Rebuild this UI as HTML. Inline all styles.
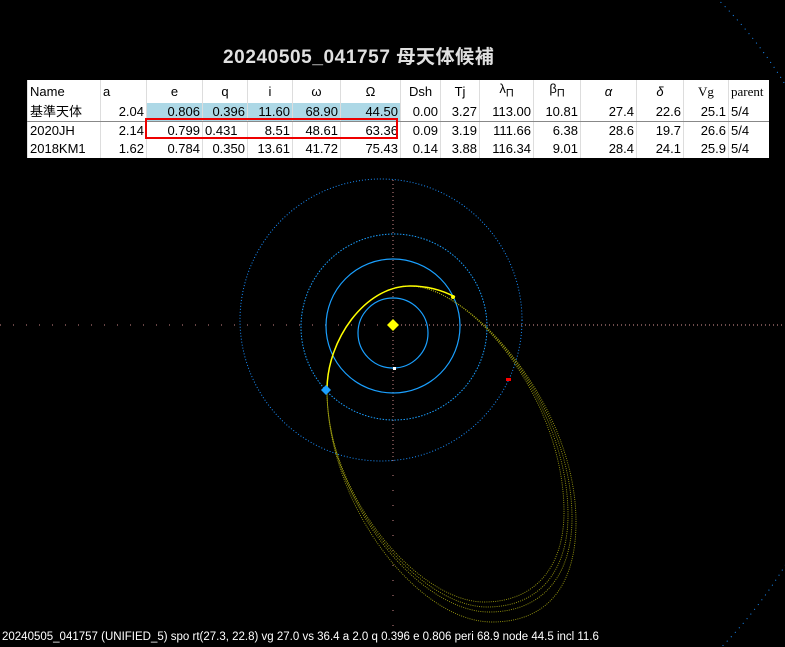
<!DOCTYPE html>
<html><head><meta charset="utf-8"><style>
html,body{margin:0;background:#000;width:785px;height:647px;overflow:hidden;position:relative;font-family:"Liberation Sans","Noto Sans CJK JP",sans-serif}
.t{position:absolute;left:223px;top:42px;width:300px;color:#e0e0e0;font-weight:bold;font-size:19px;letter-spacing:0.6px;white-space:nowrap}
table{position:absolute;left:27px;top:80px;border-collapse:collapse;background:#fff;font-size:13px;color:#000;table-layout:fixed;width:741px}
td{height:18px;padding:0 2px;border-left:1px solid #ddd;white-space:nowrap;overflow:hidden;text-align:right;line-height:17px}
tr.h td{text-align:center;height:19px}
tr.h td:first-child,tr td:first-child{text-align:left}
tr.r1 td{border-bottom:1px solid #888}
.b{background:#add8e6}
.bot{position:absolute;left:2px;top:630px;color:#fff;font-size:11.5px;line-height:14px;white-space:nowrap}
.box{position:absolute;left:145px;top:118px;width:249px;height:17px;border:2px solid #e00}
</style></head><body>
<svg width="785" height="647" style="position:absolute;left:0;top:0">
<defs><clipPath id="cr"><rect x="690" y="0" width="100" height="647"/></clipPath></defs>
<line x1="0" y1="325" x2="393" y2="325" stroke="#c88" stroke-dasharray="1 12"/>
<line x1="393" y1="325" x2="785" y2="325" stroke="#d99" stroke-dasharray="1 3"/>
<line x1="393" y1="180" x2="393" y2="460" stroke="#c88" stroke-dasharray="1 3"/>
<line x1="393" y1="460" x2="393" y2="640" stroke="#c88" stroke-dasharray="1 14"/>
<circle cx="393" cy="325" r="460" fill="none" stroke="#1a8fff" stroke-dasharray="1 5" clip-path="url(#cr)"/>
<circle cx="381" cy="320" r="141" fill="none" stroke="#1a8fff" stroke-dasharray="1 2"/>
<circle cx="394" cy="327" r="93" fill="none" stroke="#1a9fff" stroke-dasharray="1.5 1.5"/>
<circle cx="393" cy="326" r="67" fill="none" stroke="#1aa0ff" stroke-width="1.2"/>
<circle cx="393" cy="333" r="35" fill="none" stroke="#1aa0ff" stroke-width="1.2"/>
<g fill="none" stroke="#9a9a10" stroke-dasharray="1 1.2" stroke-width="0.9">
<path d="M327 390 C327 340 365 286 410 286 C470 286 568 400 568 515 C568 570 540 607 487 607 C420 607 327 500 327 390Z"/>
<path d="M327 390 C327 340 365 286 410 286 C470 286 572 402 572 518 C572 575 543 612 489 612 C420 612 327 502 327 390Z"/>
<path d="M327 390 C327 340 365 286 410 286 C470 286 564 398 564 512 C564 566 536 602 484 602 C420 602 327 498 327 390Z"/>
<path d="M327 390 C327 340 365 286 410 286 C470 286 576 404 576 522 C576 585 548 622 492 622 C418 622 327 505 327 390Z"/>
</g>
<path d="M327 390 C327 340 365 286 410 286 C428 286 442 290 455 297" fill="none" stroke="#ff0" stroke-width="1.5"/>
<rect x="506" y="378" width="5" height="3" fill="#f00"/>
<rect x="393" y="367" width="3" height="3" fill="#fff"/>
<circle cx="453" cy="297" r="2" fill="#ff0"/>
<path d="M393 319 L399 325 L393 331 L387 325Z" fill="#ff0"/>
<path d="M326 385 L331 390 L326 395 L321 390Z" fill="#1a9fff"/>
</svg>
<div class="t">20240505_041757 母天体候補</div>
<table>
<colgroup><col style="width:73px"><col style="width:46px"><col style="width:56px"><col style="width:45px"><col style="width:45px"><col style="width:48px"><col style="width:60px"><col style="width:40px"><col style="width:39px"><col style="width:54px"><col style="width:47px"><col style="width:56px"><col style="width:47px"><col style="width:45px"><col style="width:40px"></colgroup>
<tr class="h"><td>Name</td><td style="text-align:left">a</td><td>e</td><td>q</td><td>i</td><td>ω</td><td>Ω</td><td>Dsh</td><td>Tj</td><td>λ<sub>Π</sub></td><td>β<sub>Π</sub></td><td><i>α</i></td><td><i>δ</i></td><td style="font-family:'Liberation Serif',serif">Vg</td><td style="text-align:left;font-family:'Liberation Serif',serif">parent</td></tr>
<tr class="r1"><td>基準天体</td><td>2.04</td><td class="b">0.806</td><td class="b">0.396</td><td class="b">11.60</td><td class="b">68.90</td><td class="b">44.50</td><td>0.00</td><td>3.27</td><td>113.00</td><td>10.81</td><td>27.4</td><td>22.6</td><td>25.1</td><td style="text-align:left">5/4</td></tr>
<tr><td>2020JH</td><td>2.14</td><td>0.799</td><td style="text-align:left">0.431</td><td>8.51</td><td>48.61</td><td>63.36</td><td>0.09</td><td>3.19</td><td>111.66</td><td>6.38</td><td>28.6</td><td>19.7</td><td>26.6</td><td style="text-align:left">5/4</td></tr>
<tr><td>2018KM1</td><td>1.62</td><td>0.784</td><td>0.350</td><td>13.61</td><td>41.72</td><td>75.43</td><td>0.14</td><td>3.88</td><td>116.34</td><td>9.01</td><td>28.4</td><td>24.1</td><td>25.9</td><td style="text-align:left">5/4</td></tr>
</table>
<div class="box"></div>
<div class="bot">20240505_041757 (UNIFIED_5) spo rt(27.3, 22.8) vg 27.0 vs 36.4 a 2.0 q 0.396 e 0.806 peri 68.9 node 44.5 incl 11.6</div>
</body></html>
